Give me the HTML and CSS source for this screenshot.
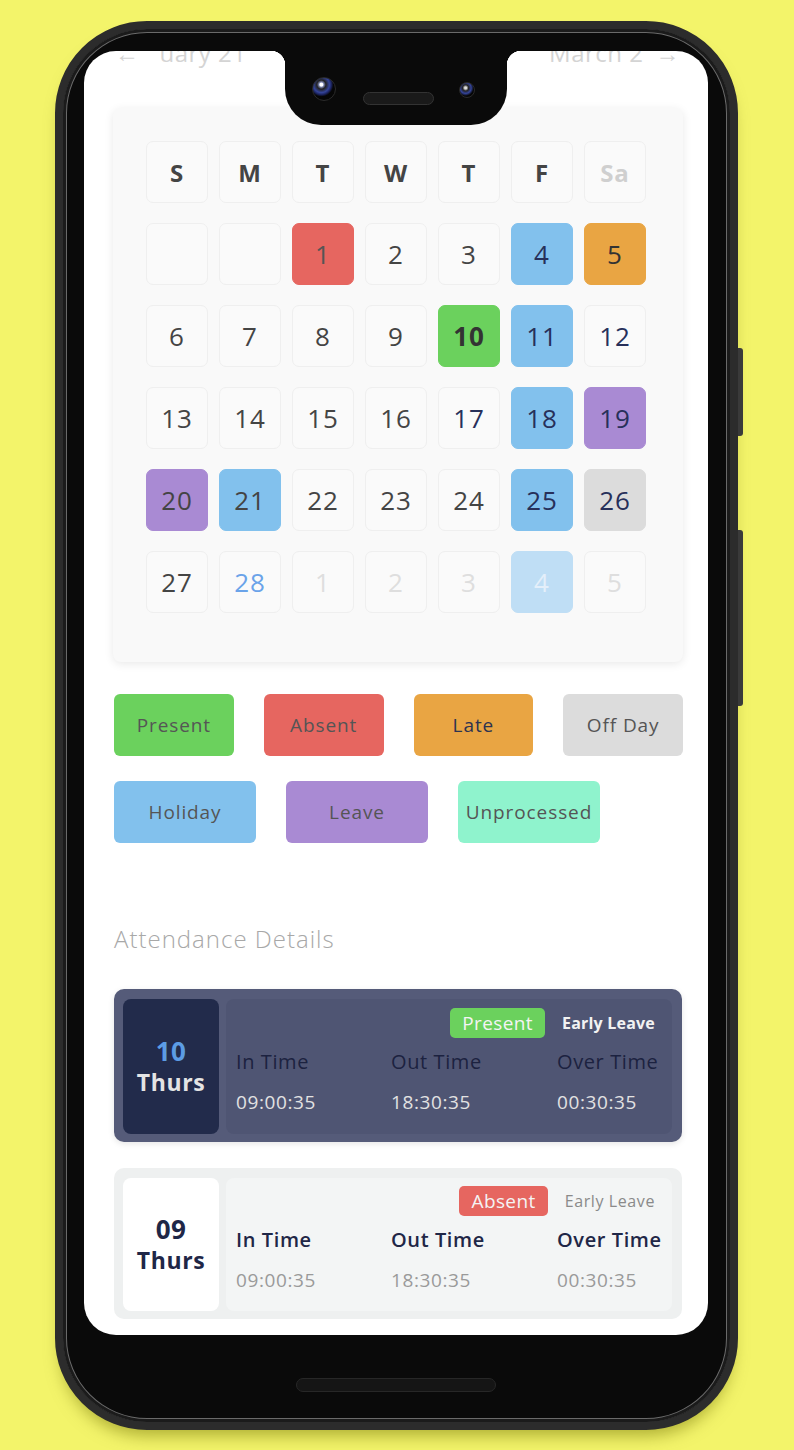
FILE: index.html
```html
<!DOCTYPE html>
<html lang="en">
<head>
  <meta charset="UTF-8">
  <title>Attendance</title>
  <link rel="stylesheet" href="styles.css">
</head>
<body>

<div class="phone">
  <span class="side-btn power"></span>
  <span class="side-btn volume"></span>

  <div class="screen">
    <!-- notch with cameras -->
    <div class="notch">
      <span class="cam cam-big"></span>
      <span class="speaker"></span>
      <span class="cam cam-small"></span>
    </div>

    <div class="content">
      <div class="month-nav">
        <div class="nav-item"><span>&larr;</span><span>uary 21</span></div>
        <div class="nav-item"><span>March 2</span><span>&rarr;</span></div>
      </div>

      <div class="calendar">
        <div class="cal-grid">
          <div class="cell head">S</div>
          <div class="cell head">M</div>
          <div class="cell head">T</div>
          <div class="cell head">W</div>
          <div class="cell head">T</div>
          <div class="cell head">F</div>
          <div class="cell head sat">Sa</div>

          <div class="cell"></div>
          <div class="cell"></div>
          <div class="cell absent">1</div>
          <div class="cell">2</div>
          <div class="cell">3</div>
          <div class="cell holiday">4</div>
          <div class="cell late">5</div>

          <div class="cell">6</div>
          <div class="cell">7</div>
          <div class="cell">8</div>
          <div class="cell">9</div>
          <div class="cell present">10</div>
          <div class="cell holiday">11</div>
          <div class="cell navy">12</div>

          <div class="cell">13</div>
          <div class="cell">14</div>
          <div class="cell">15</div>
          <div class="cell">16</div>
          <div class="cell navy">17</div>
          <div class="cell holiday">18</div>
          <div class="cell leave navy">19</div>

          <div class="cell leave">20</div>
          <div class="cell holiday gray">21</div>
          <div class="cell">22</div>
          <div class="cell">23</div>
          <div class="cell">24</div>
          <div class="cell holiday">25</div>
          <div class="cell off navy">26</div>

          <div class="cell">27</div>
          <div class="cell today">28</div>
          <div class="cell muted">1</div>
          <div class="cell muted">2</div>
          <div class="cell muted">3</div>
          <div class="cell holiday faded">4</div>
          <div class="cell muted">5</div>
        </div>
      </div>

      <div class="legend">
        <div class="legend-row">
          <div class="tag present">Present</div>
          <div class="tag absent">Absent</div>
          <div class="tag late">Late</div>
          <div class="tag off">Off Day</div>
        </div>
        <div class="legend-row wide">
          <div class="tag holiday">Holiday</div>
          <div class="tag leave">Leave</div>
          <div class="tag unprocessed">Unprocessed</div>
        </div>
      </div>

      <h2 class="section-title">Attendance Details</h2>

      <div class="att-card dark">
        <div class="day-box">
          <div class="day-num">10</div>
          <div class="day-name">Thurs</div>
        </div>
        <div class="detail">
          <div class="detail-top">
            <span class="badge present">Present</span>
            <span class="early">Early Leave</span>
          </div>
          <div class="times">
            <div class="t-label">In Time</div>
            <div class="t-label">Out Time</div>
            <div class="t-label">Over Time</div>
            <div class="t-value">09:00:35</div>
            <div class="t-value">18:30:35</div>
            <div class="t-value">00:30:35</div>
          </div>
        </div>
      </div>

      <div class="att-card light">
        <div class="day-box">
          <div class="day-num">09</div>
          <div class="day-name">Thurs</div>
        </div>
        <div class="detail">
          <div class="detail-top">
            <span class="badge absent">Absent</span>
            <span class="early">Early Leave</span>
          </div>
          <div class="times">
            <div class="t-label">In Time</div>
            <div class="t-label">Out Time</div>
            <div class="t-label">Over Time</div>
            <div class="t-value">09:00:35</div>
            <div class="t-value">18:30:35</div>
            <div class="t-value">00:30:35</div>
          </div>
        </div>
      </div>
    </div>
  </div>

  <div class="chin"><span class="home-bar"></span></div>
</div>

</body>
</html>
```

FILE: styles.css
```css
body {
  margin: 0;
  background: #f3f46a;
  font-family: "Open Sans", "Liberation Sans", sans-serif;
  height: 1450px;
  overflow: hidden;
}

/* phone body */
.phone {
  position: relative;
  width: 683px;
  height: 1409px;
  box-sizing: border-box;
  margin: 21px 0 0 55px;
  padding: 22px 22px 0 21px;
  border: 8px solid #2c2c2c;
  border-radius: 92px;
  background: #0a0a0a;
  box-shadow: inset 0 0 0 3px #1b1b1b, inset 0 0 0 4px #6a6a6a, 0 12px 16px -6px rgba(110, 110, 0, .5);
}
.side-btn {
  position: absolute;
  right: -13px;
  width: 5px;
  background: #3a3a3a;
  border-radius: 0 3px 3px 0;
}
.power { top: 319px; height: 88px; }
.volume { top: 501px; height: 176px; }

.screen {
  position: relative;
  height: 1284px;
  background: #fff;
  border-radius: 32px;
  overflow: hidden;
}
.notch {
  position: absolute;
  top: 0;
  left: 201px;
  width: 222px;
  height: 74px;
  box-sizing: border-box;
  padding: 26px 0 0 27px;
  display: flex;
  align-items: flex-start;
  background: #0a0a0a;
  border-radius: 0 0 36px 36px;
  z-index: 2;
}
.notch::before,
.notch::after {
  content: "";
  position: absolute;
  top: 0;
  width: 14px;
  height: 14px;
}
.notch::before {
  left: -14px;
  background: radial-gradient(circle at 0 100%, transparent 14px, #0a0a0a 14.5px);
}
.notch::after {
  right: -14px;
  background: radial-gradient(circle at 100% 100%, transparent 14px, #0a0a0a 14.5px);
}
.cam {
  border-radius: 50%;
  box-sizing: border-box;
  border: 1px solid #2a2a2a;
}
.cam-big {
  width: 24px;
  height: 24px;
  background: radial-gradient(circle at 38% 30%, #fff 0 1.5px, #7d86b0 2.5px, #222 4.5px, #34449a 8px, #1c2460 10px, #060606 12px);
}
.cam-small {
  width: 16px;
  height: 16px;
  margin: 5px 0 0 25px;
  background: radial-gradient(circle at 40% 35%, #ddd 0 1px, #222 3px, #34449a 5.5px, #060606 8px);
}
.speaker {
  width: 71px;
  height: 13px;
  margin: 15px 0 0 27px;
  border-radius: 7px;
  background: #1a1a1a;
  border: 1px solid #333;
  box-sizing: border-box;
}

.content {
  padding: 0 25px 0 29px;
}
.month-nav {
  display: flex;
  justify-content: space-between;
  height: 30px;
  margin-top: -13px;
  padding: 0 3px 0 2px;
  font-size: 24px;
  line-height: 30px;
  color: #d4d4d4;
  letter-spacing: .5px;
}
.nav-item {
  display: flex;
  gap: 20px;
}
.nav-item:last-child { gap: 12px; }

/* calendar */
.calendar {
  margin-top: 40px;
  background: #f9f9f9;
  border-radius: 8px;
  padding: 33px 37px 49px 33px;
  box-shadow: 0 2px 10px rgba(0, 0, 0, .09);
}
.cal-grid {
  display: grid;
  grid-template-columns: repeat(7, 62px);
  grid-auto-rows: 62px;
  column-gap: 11px;
  row-gap: 20px;
}
.cell {
  display: flex;
  align-items: center;
  justify-content: center;
  box-sizing: border-box;
  border: 1px solid #efefef;
  border-radius: 7px;
  background: #fafafa;
  font-size: 26px;
  letter-spacing: 1px;
  color: #444;
}
.cell.head { font-size: 24px; font-weight: 700; color: #444; letter-spacing: 1px; }
.cell.sat { color: #cfcfcf; }
.cell.navy { color: #27305a; }
.cell.today { color: #6aa3e9; }
.cell.muted { color: #dedede; }
.cell.present { font-weight: 700; color: #333; }

.present { background: #6bd15d; border-color: #6bd15d; }
.absent { background: #e66660; border-color: #e66660; }
.late { background: #e9a543; border-color: #e9a543; }
.off { background: #dcdcdc; border-color: #dcdcdc; }
.holiday { background: #82c1ed; border-color: #82c1ed; }
.leave { background: #a98ad3; border-color: #a98ad3; }
.unprocessed { background: #8ff3cd; }
.cell.holiday { color: #27305a; }
.cell.absent { color: #555; }
.cell.late { color: #333; }
.cell.holiday.gray { color: #444; }
.cell.holiday.faded { background: #bfdef5; border-color: #bfdef5; color: #e4effa; }

/* legend */
.legend {
  margin-top: 32px;
  display: flex;
  flex-direction: column;
  gap: 25px;
}
.legend-row {
  display: flex;
  gap: 30px;
  padding-left: 1px;
}
.tag {
  width: 120px;
  height: 62px;
  border-radius: 6px;
  display: flex;
  align-items: center;
  justify-content: center;
  font-size: 19px;
  letter-spacing: .9px;
  color: #555;
}
.legend-row.wide .tag { width: 142px; }
.tag.late { color: #2d3350; }

.section-title {
  margin: 82px 0 0 1px;
  font-size: 24px;
  line-height: 28px;
  font-weight: 300;
  letter-spacing: 1px;
  color: #a8a8a8;
}

/* attendance cards */
.att-card {
  display: flex;
  gap: 7px;
  height: 153px;
  box-sizing: border-box;
  margin: 36px 1px 0 1px;
  padding: 10px 10px 8px 9px;
  border-radius: 10px;
  box-shadow: 0 2px 6px rgba(0, 0, 0, .1);
}
.att-card.light {
  height: 151px;
  margin-top: 26px;
  background: #eef0f0;
  box-shadow: none;
}
.att-card.dark { background: #555b79; }
.day-box {
  flex: none;
  width: 96px;
  border-radius: 8px;
  display: flex;
  flex-direction: column;
  align-items: center;
  justify-content: center;
  font-weight: 700;
}
.day-num { font-size: 26px; line-height: 31px; letter-spacing: .5px; }
.day-name { font-size: 23px; line-height: 30px; letter-spacing: .6px; }
.dark .day-box { background: #222b4b; }
.dark .day-num { color: #5c9ce4; }
.dark .day-name { color: #e4e4e4; }
.light .day-box { background: #fff; color: #1f2747; }

.detail {
  flex: 1;
  min-width: 0;
  border-radius: 8px;
  padding: 9px 17px 0 10px;
}
.dark .detail { background: #4f5573; }
.light .detail { background: #f3f5f5; padding-top: 8px; }
.detail-top {
  display: flex;
  justify-content: flex-end;
  align-items: center;
  gap: 17px;
  height: 30px;
}
.badge {
  height: 30px;
  line-height: 30px;
  padding: 0 12px;
  border-radius: 5px;
  font-size: 19px;
  letter-spacing: .4px;
  color: #f4f4f4;
}
.early { font-size: 16px; letter-spacing: .2px; }
.dark .early { color: #f2f2f2; font-weight: 700; }
.light .early { color: #8a8a8a; letter-spacing: .6px; }

.times {
  display: grid;
  grid-template-columns: 155px 166px 1fr;
  row-gap: 14px;
  margin-top: 11px;
}
.t-label {
  font-size: 20px;
  line-height: 26px;
  font-weight: 500;
  letter-spacing: .6px;
  white-space: nowrap;
}
.t-value {
  font-size: 19px;
  line-height: 26px;
  letter-spacing: .6px;
}
.dark .t-label { color: #1c2240; }
.dark .t-value { color: #e2e2e2; }
.light .t-label { color: #1f2747; font-weight: 600; }
.light .t-value { color: #9a9a9a; }

.chin {
  display: flex;
  justify-content: center;
  padding-top: 43px;
}
.home-bar {
  width: 200px;
  height: 14px;
  border-radius: 7px;
  background: #151515;
  border: 1px solid #272727;
  box-sizing: border-box;
}
```
